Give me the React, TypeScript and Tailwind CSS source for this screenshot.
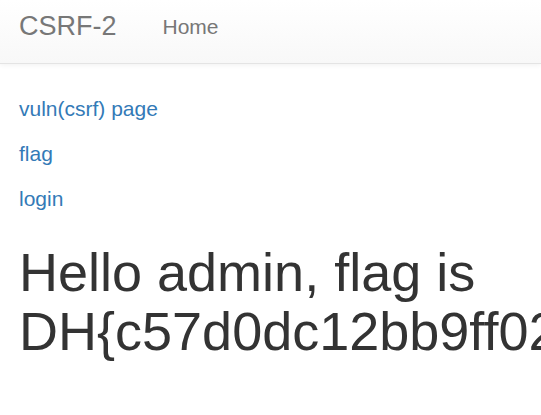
export default function App() {
  return (
    <div
      className="min-h-[415px] w-full overflow-hidden bg-white text-[#333]"
      style={{ fontFamily: '"Liberation Sans", Arial, sans-serif' }}
    >
      {/* navbar */}
      <nav className="h-[64px] border-b border-[#e4e4e4] bg-gradient-to-b from-white to-[#f8f8f8] shadow-[0_1px_5px_rgba(0,0,0,0.06)]">
        <div className="flex h-full items-start pt-[11px]">
          <a className="pl-[19px] pr-[46px] text-[27px] leading-[31px] text-[#777]">CSRF-2</a>
          <a className="pt-[4px] text-[21px] leading-[24px] text-[#777]">Home</a>
        </div>
      </nav>

      {/* content */}
      <div className="px-[19px] pt-[33px]">
        <div className="flex flex-col gap-[21px] text-[21px] leading-[24px] text-[#337ab7]">
          <a>vuln(csrf) page</a>
          <a>flag</a>
          <a>login</a>
        </div>
        <h1 className="mt-[32px] whitespace-nowrap text-[54px] leading-[59px]">
          Hello admin, flag is
          <br />
          DH{"{"}c57d0dc12bb9ff02a8e6f1c4d3b7e5a9{"}"}
        </h1>
      </div>
    </div>
  );
}
